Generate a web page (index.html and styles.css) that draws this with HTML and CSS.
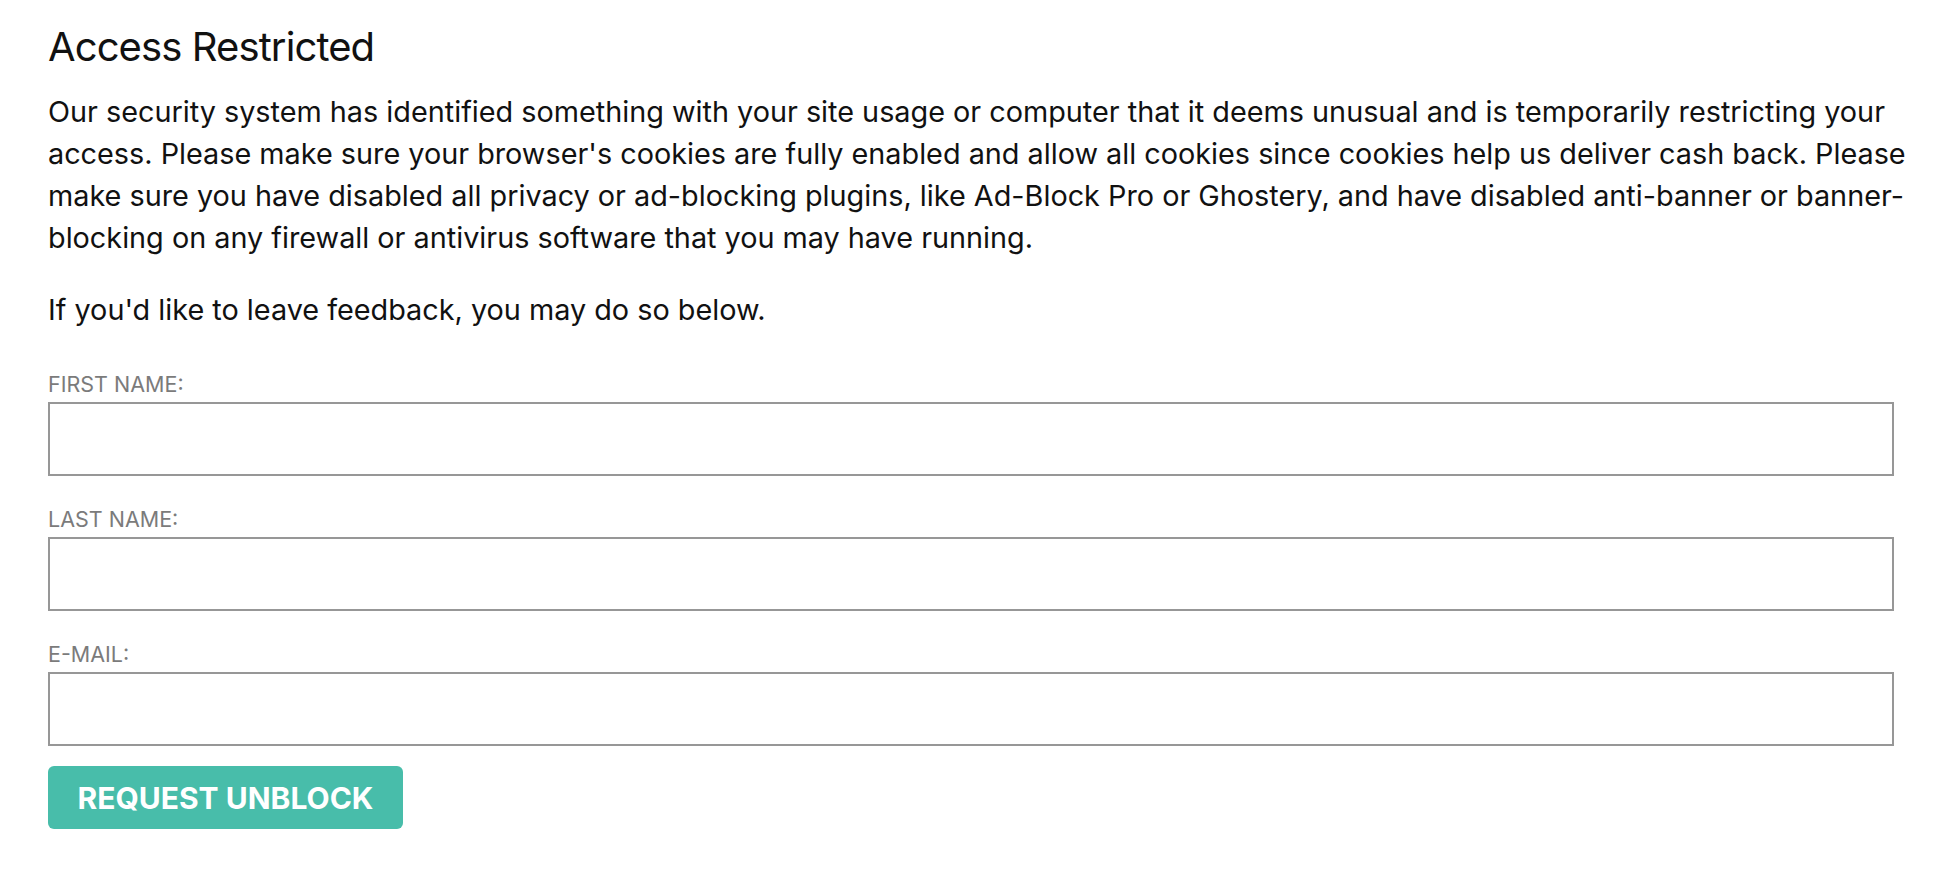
FILE: index.html
```html
<!DOCTYPE html>
<html lang="en">
<head>
    <meta charset="UTF-8">
    <meta name="viewport" content="width=device-width, initial-scale=1.0">
    <title>Access Restricted</title>
    <link rel="stylesheet" href="styles.css">
</head>
<body>
    <div class="page">
        <h1>Access Restricted</h1>
        <p class="notice">Our security system has identified something with your site usage or computer that it deems unusual and is temporarily restricting your access. Please make sure your browser's cookies are fully enabled and allow all cookies since cookies help us deliver cash back. Please make sure you have disabled all privacy or ad-blocking plugins, like Ad-Block Pro or Ghostery, and have disabled anti-banner or banner-blocking on any firewall or antivirus software that you may have running.</p>
        <p class="intro">If you'd like to leave feedback, you may do so below.</p>

        <form class="feedback" onsubmit="return false;">
            <div class="field">
                <label for="first-name">First Name:</label>
                <input type="text" id="first-name">
            </div>
            <div class="field">
                <label for="last-name">Last Name:</label>
                <input type="text" id="last-name">
            </div>
            <div class="field">
                <label for="email">E-mail:</label>
                <input type="email" id="email">
            </div>
            <button type="submit" class="unblock">Request Unblock</button>
        </form>
    </div>
</body>
</html>
```

FILE: styles.css
```css
body {
    margin: 0;
    font-family: Inter, "Noto Sans", Arial, sans-serif;
    background-color: #fff;
    color: #111;
}
.page {
    width: 1866px;
    padding: 23px 0 40px 48px;
}
h1 {
    margin: 0 0 20px;
    font-size: 40px;
    font-weight: 400;
    line-height: 48px;
    letter-spacing: -0.9px;
}
.notice,
.intro {
    margin: 0;
    font-size: 28.8px;
    line-height: 42px;
}
.intro {
    margin-top: 30px;
}
.feedback {
    margin-top: 40px;
}
.field + .field {
    margin-top: 30px;
}
label {
    display: block;
    margin-bottom: 5px;
    font-size: 21.5px;
    line-height: 26px;
    color: #7b7b7b;
    text-transform: uppercase;
}
input {
    display: block;
    box-sizing: border-box;
    width: 1846px;
    height: 74px;
    padding: 0 12px;
    border: 2px solid #979797;
    border-radius: 0;
    font-family: inherit;
    font-size: 24px;
    outline: none;
}
.unblock {
    display: block;
    margin-top: 20px;
    width: 355px;
    height: 63px;
    padding: 0;
    border: none;
    border-radius: 6px;
    background-color: #48bdaa;
    color: #fff;
    font-family: inherit;
    font-size: 30px;
    font-weight: 700;
    text-transform: uppercase;
    cursor: pointer;
}
```
